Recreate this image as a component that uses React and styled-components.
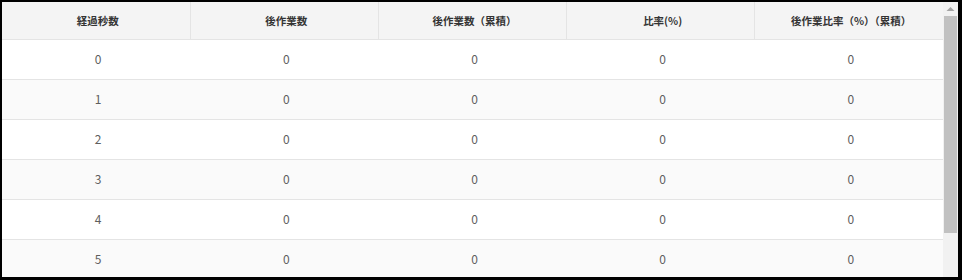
import React from 'react'
import styled, { createGlobalStyle } from 'styled-components'

const GlobalStyle = createGlobalStyle`
  html, body {
    margin: 0;
    padding: 0;
    background: #000;
  }
  body {
    font-family: "Noto Sans CJK JP", "Noto Sans", sans-serif;
  }
`

const columns = [
  { key: 'sec', title: '経過秒数' },
  { key: 'count', title: '後作業数' },
  { key: 'sum', title: '後作業数（累積）' },
  { key: 'rate', title: '比率(%)' },
  { key: 'rateSum', title: '後作業比率（%）（累積）' },
]

const rows = [0, 1, 2, 3, 4, 5].map((sec) => ({
  sec,
  count: 0,
  sum: 0,
  rate: 0,
  rateSum: 0,
}))

const App = () => {
  return (
    <>
      <GlobalStyle />
      <Frame>
        <Viewport>
          <Table>
            <thead>
              <tr>
                {columns.map(({ key, title }) => (
                  <HeadCell key={key}>{title}</HeadCell>
                ))}
              </tr>
            </thead>
            <tbody>
              {rows.map((row, index) => (
                <Row key={row.sec} striped={index % 2 === 1}>
                  {columns.map(({ key }) => (
                    <Cell key={key}>{row[key]}</Cell>
                  ))}
                </Row>
              ))}
            </tbody>
          </Table>
        </Viewport>
        <Scrollbar>
          <ArrowButton>
            <svg width="15" height="14" viewBox="0 0 15 14">
              <polygon points="3.5,9 11.5,9 7.5,5" fill="#a3a3a3" />
            </svg>
          </ArrowButton>
          <Thumb />
        </Scrollbar>
      </Frame>
    </>
  )
}

const Frame = styled.div`
  display: flex;
  width: 956px;
  height: 275px;
  border-style: solid;
  border-color: #000;
  border-width: 2px 4px 3px 2px;
  background: #fff;
`

const Viewport = styled.div`
  flex: 1;
  overflow: hidden;
`

const Scrollbar = styled.div`
  display: flex;
  flex-direction: column;
  width: 15px;
  background: #f1f1f1;
`

const ArrowButton = styled.div`
  height: 14px;
  display: flex;
  align-items: center;
  justify-content: center;
`

const Thumb = styled.div`
  height: 217px;
  margin: 0 1px;
  background: #c1c1c1;
`

const Table = styled.table`
  width: 100%;
  border-collapse: collapse;
  table-layout: fixed;
`

const HeadCell = styled.th`
  height: 36px;
  padding: 0 6px 1px 10px;
  background: #f4f4f4;
  border-bottom: 1px solid #e4e4e4;
  border-right: 1px solid #e4e4e4;
  color: #333;
  font-size: 10.5px;
  font-weight: 700;
  text-align: center;

  &:last-child {
    border-right: none;
  }
`

const Row = styled.tr`
  background: ${({ striped }) => (striped ? '#fafafa' : '#fff')};
`

const Cell = styled.td`
  height: 36px;
  padding: 0 6px 3px 10px;
  border-bottom: 1px solid #e4e4e4;
  color: #5e5e5e;
  font-size: 12px;
  text-align: center;
`

export default App
